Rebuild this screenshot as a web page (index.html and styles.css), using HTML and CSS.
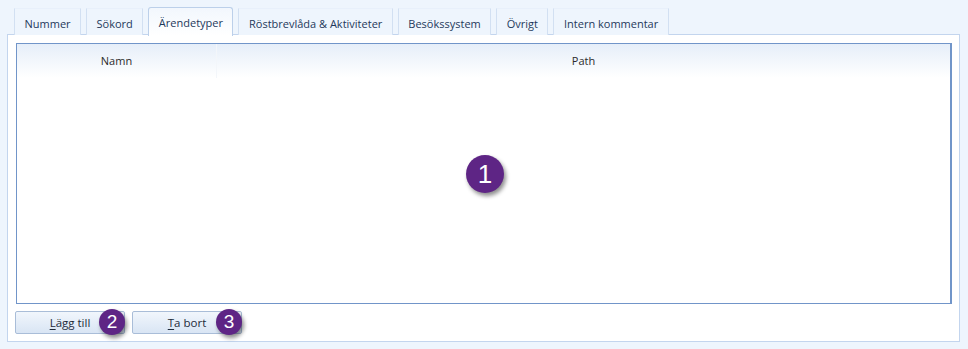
FILE: index.html
```html
<!DOCTYPE html>
<html lang="sv">
<head>
  <meta charset="UTF-8">
  <title>Ärendetyper</title>
  <link rel="stylesheet" href="styles.css">
</head>
<body>
  <div class="window">
    <div class="tabs">
      <div class="tab">Nummer</div>
      <div class="tab">Sökord</div>
      <div class="tab active">Ärendetyper</div>
      <div class="tab">Röstbrevlåda &amp; Aktiviteter</div>
      <div class="tab">Besökssystem</div>
      <div class="tab">Övrigt</div>
      <div class="tab">Intern kommentar</div>
    </div>
    <div class="panel">
      <div class="grid">
        <div class="grid-head">
          <div class="col col-name">Namn</div>
          <div class="col col-path">Path</div>
        </div>
        <div class="grid-body"></div>
        <span class="badge badge-big">1</span>
      </div>
      <div class="buttons">
        <button class="btn"><u>L</u>ägg till<span class="badge">2</span></button>
        <button class="btn"><u>T</u>a bort<span class="badge">3</span></button>
      </div>
    </div>
  </div>
</body>
</html>
```

FILE: styles.css
```css
body {
  margin: 0;
  background: #eef5fd;
  font-family: "Open Sans", "Noto Sans", sans-serif;
  font-size: 11px;
  color: #1e395b;
}
.window {
  padding: 7px 8px 0 7px;
  width: 953px;
}
.tabs {
  display: flex;
  gap: 5px;
  padding-left: 7px;
  height: 28px;
  position: relative;
  z-index: 1;
  margin-bottom: -1px;
}
.tab {
  margin-top: 1px;
  padding: 2px 9.5px 0;
  border: 1px solid #d2e0f2;
  border-top-color: #e8f0fb;
  border-bottom: none;
  background: #eef5fd;
  display: flex;
  align-items: center;
  white-space: nowrap;
}
.tab.active {
  margin-top: 0;
  height: 29px;
  border: 1px solid #bcd0ea;
  border-bottom: none;
  border-radius: 3px 3px 0 0;
  background: linear-gradient(#f2f7fd, #ffffff);
  padding: 1px 9.5px 0;
  box-sizing: border-box;
}
.panel {
  background: #fff;
  border: 1px solid #c3d5ee;
  padding: 8px 7px 7px 8px;
  height: 291px;
}
.grid {
  position: relative;
  border: 1px solid #7195c9;
  border-right-width: 2px;
  height: 259px;
  display: flex;
  flex-direction: column;
}
.grid-head {
  display: flex;
  height: 34px;
  background: linear-gradient(#e6eef9, #ffffff);
  color: #2b2b2b;
}
.col {
  display: flex;
  justify-content: center;
  align-items: center;
  padding-bottom: 2px;
}
.col-name {
  width: 199px;
  border-right: 1px solid #f3f6fa;
}
.col-path {
  flex: 1;
}
.grid-body {
  flex: 1;
}
.badge {
  position: absolute;
  width: 26px;
  height: 26px;
  border-radius: 50%;
  background: #5e2585;
  color: #fff;
  font-family: "Liberation Sans", Arial, sans-serif;
  font-size: 19px;
  line-height: 26px;
  text-align: center;
  box-shadow: 2px 3px 4px rgba(0, 0, 0, 0.45);
  right: -1px;
  top: -3px;
}
.badge-big {
  width: 38px;
  height: 38px;
  line-height: 38px;
  font-size: 26px;
  left: 449px;
  top: 111px;
  right: auto;
}
.buttons {
  display: flex;
  gap: 7px;
  margin-top: 7px;
  margin-left: -1px;
}
.btn {
  position: relative;
  width: 110px;
  height: 23px;
  padding: 0;
  border: 1px solid #a9bdd8;
  border-radius: 2px;
  background: linear-gradient(#f1f6fc, #d9e5f4);
  font-family: "Open Sans", "Noto Sans", sans-serif;
  font-size: 11.5px;
  color: #1e2a3a;
}
.btn u {
  text-decoration-thickness: 1px;
  text-underline-offset: 2px;
}
```
